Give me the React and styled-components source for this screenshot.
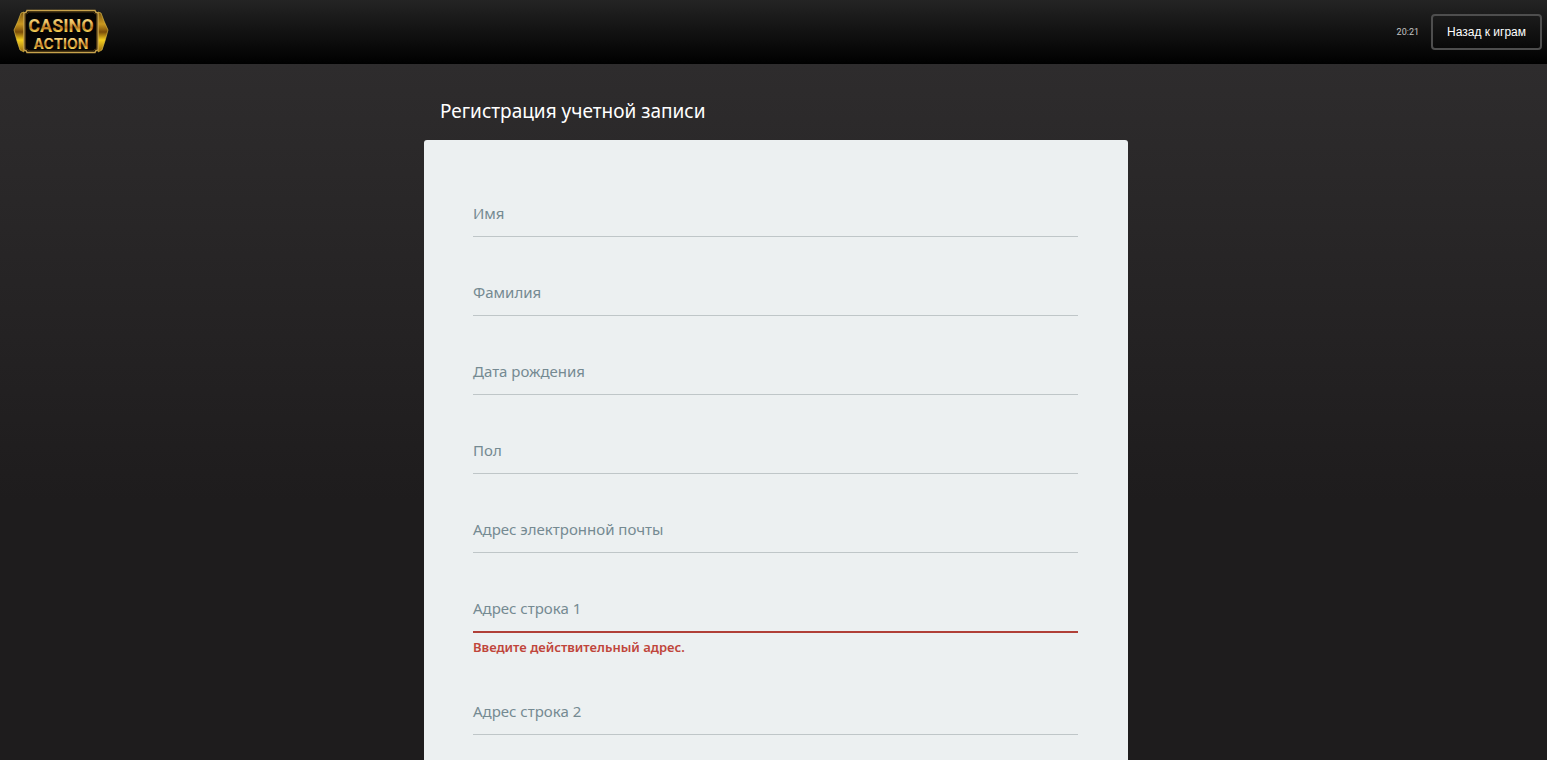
import React, { useState } from "react";
import styled, { createGlobalStyle } from "styled-components";

const GlobalStyle = createGlobalStyle`
  * {
    box-sizing: border-box;
  }
  body {
    margin: 0;
    background: #1e1c1d;
    font-family: "Noto Sans", "Open Sans", sans-serif;
  }
`;

const Page = styled.div`
  display: flex;
  flex-direction: column;
  min-height: 100vh;
  background: linear-gradient(#2e2c2d 64px, #1e1c1d 500px);
`;

const Header = styled.header`
  display: flex;
  align-items: center;
  justify-content: space-between;
  height: 64px;
  padding: 0 5px 0 13px;
  background: linear-gradient(#242424, #000);
`;

const LogoLink = styled.a`
  display: flex;
`;

const HeaderRight = styled.div`
  display: flex;
  align-items: center;
  gap: 12px;
`;

const Clock = styled.time`
  color: #c4c4c4;
  font-family: Roboto, sans-serif;
  font-size: 9px;
`;

const BackButton = styled.button`
  height: 36px;
  padding: 0 14px;
  border: 2px solid #4e4e4e;
  border-radius: 4px;
  background: transparent;
  color: #fff;
  font-family: "Liberation Sans", Arial, sans-serif;
  font-size: 12px;
  cursor: pointer;
`;

const Main = styled.main`
  display: flex;
  flex: 1;
  flex-direction: column;
  width: 100%;
  max-width: 709px;
  margin: 0 auto;
  padding-left: 5px;
`;

const Title = styled.h1`
  margin: 0;
  padding: 32px 16px 14px;
  color: #fff;
  font-size: 19px;
  font-weight: 400;
  line-height: 30px;
`;

const Form = styled.form`
  display: flex;
  flex: 1;
  flex-direction: column;
  gap: 34px;
  padding: 52px 50px 24px 49px;
  border-radius: 3px 3px 0 0;
  background: #ecf0f1;
`;

const FieldBox = styled.div`
  display: grid;
  border-bottom: ${({ $invalid }) =>
    $invalid ? "2px solid #b04038" : "1px solid #bfc6c8"};

  & > * {
    grid-area: 1 / 1;
  }
`;

const Label = styled.label`
  padding-top: 11px;
  color: #758a92;
  font-size: 15px;
  line-height: 20px;
  pointer-events: none;
  visibility: ${({ $hidden }) => ($hidden ? "hidden" : "visible")};
`;

const Input = styled.input`
  width: 100%;
  height: 44px;
  padding: 0;
  border: 0;
  outline: 0;
  appearance: none;
  background: transparent;
  color: #2c3e50;
  font: inherit;
  font-size: 15px;
`;

const ErrorText = styled.p`
  margin: 0;
  padding-top: 5px;
  color: #c0453b;
  font-size: 13px;
  font-weight: 600;
  line-height: 18px;
`;

const fields = [
  { id: "firstName", label: "Имя" },
  { id: "lastName", label: "Фамилия" },
  { id: "birthDate", label: "Дата рождения" },
  { id: "gender", label: "Пол", options: ["Мужской", "Женский"] },
  { id: "email", label: "Адрес электронной почты", type: "email" },
  {
    id: "address1",
    label: "Адрес строка 1",
    error: "Введите действительный адрес.",
  },
  { id: "address2", label: "Адрес строка 2" },
];

const Logo = () => (
  <svg width="96" height="46" viewBox="0 0 96 46" aria-label="Casino Action">
    <defs>
      <linearGradient id="wing" x1="0" y1="0" x2="0" y2="1">
        <stop offset="0" stopColor="#7d5710" />
        <stop offset="0.3" stopColor="#c99820" />
        <stop offset="0.5" stopColor="#7a4c08" />
        <stop offset="0.7" stopColor="#f5cf1e" />
        <stop offset="1" stopColor="#9a6a10" />
      </linearGradient>
      <linearGradient id="letters" x1="0" y1="0" x2="0" y2="1">
        <stop offset="0" stopColor="#fff0b0" />
        <stop offset="0.35" stopColor="#ecc060" />
        <stop offset="0.6" stopColor="#b87820" />
        <stop offset="0.8" stopColor="#f6d45a" />
        <stop offset="1" stopColor="#c58a1c" />
      </linearGradient>
    </defs>
    <g fill="url(#wing)" stroke="#e8c54a" strokeWidth="0.6">
      <path d="M11 3 8 4 5 12 1 21 4 32 7 41 11 43Z" />
      <path d="M85 3 88 4 91 12 95 21 92 32 89 41 85 43Z" />
    </g>
    <path
      d="M14 1.5H82Q82.5 4 85 4V41Q82.5 41 82 43.5H14Q13.5 41 11 41V4Q13.5 4 14 1.5Z"
      fill="#050403"
      stroke="#c8a24c"
      strokeWidth="1.3"
    />
    <path
      d="M15.5 3H80.5Q81 5 83.5 5V40Q81 40 80.5 42H15.5Q15 40 12.5 40V5Q15 5 15.5 3Z"
      fill="none"
      stroke="#77541a"
      strokeWidth="0.6"
    />
    <g fill="url(#letters)" textAnchor="middle" fontWeight="700">
      <text x="48" y="23" fontSize="18" fontFamily="Roboto, sans-serif">
        CASINO
      </text>
      <text x="48" y="40" fontSize="14" fontFamily="Inter, sans-serif">
        ACTION
      </text>
    </g>
  </svg>
);

const Field = ({ id, label, type = "text", options, error }) => {
  const [value, setValue] = useState("");
  const control = {
    id,
    name: id,
    value,
    onChange: (e) => setValue(e.target.value),
    "aria-invalid": Boolean(error),
    "aria-describedby": error ? `${id}-error` : undefined,
  };

  return (
    <div>
      <FieldBox $invalid={Boolean(error)}>
        {options ? (
          <Input as="select" {...control}>
            <option value="" />
            {options.map((option) => (
              <option key={option}>{option}</option>
            ))}
          </Input>
        ) : (
          <Input type={type} {...control} />
        )}
        <Label htmlFor={id} $hidden={value !== ""}>
          {label}
        </Label>
      </FieldBox>
      {error && <ErrorText id={`${id}-error`}>{error}</ErrorText>}
    </div>
  );
};

const App = () => {
  return (
    <Page>
      <GlobalStyle />
      <Header>
        <LogoLink href="#">
          <Logo />
        </LogoLink>
        <HeaderRight>
          <Clock>20:21</Clock>
          <BackButton type="button">Назад к играм</BackButton>
        </HeaderRight>
      </Header>
      <Main>
        <Title>Регистрация учетной записи</Title>
        <Form>
          {fields.map((field) => (
            <Field key={field.id} {...field} />
          ))}
        </Form>
      </Main>
    </Page>
  );
};

export default App;
